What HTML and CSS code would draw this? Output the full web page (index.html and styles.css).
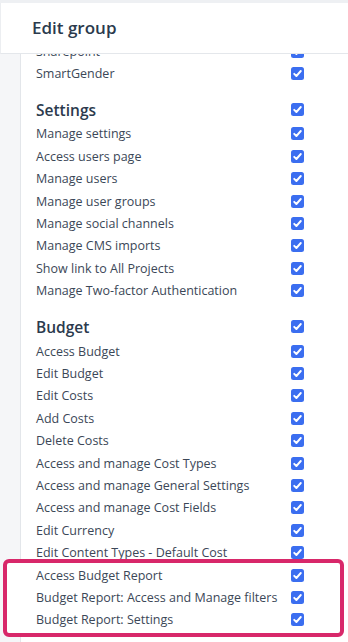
FILE: index.html
```html
<!DOCTYPE html>
<html>
<head>
<meta charset="utf-8">
<link rel="stylesheet" href="styles.css">
</head>
<body>
<div class="topstrip"></div>
<header class="header"><h1 class="title">Edit group</h1></header>
<main class="main">
  <div class="list">
    <div class="row"><span class="label">Sharepoint</span><span class="cb"></span></div>
    <div class="row"><span class="label">SmartGender</span><span class="cb"></span></div>

    <div class="row heading"><span class="label">Settings</span><span class="cb"></span></div>
    <div class="row"><span class="label">Manage settings</span><span class="cb"></span></div>
    <div class="row"><span class="label">Access users page</span><span class="cb"></span></div>
    <div class="row"><span class="label">Manage users</span><span class="cb"></span></div>
    <div class="row"><span class="label">Manage user groups</span><span class="cb"></span></div>
    <div class="row"><span class="label">Manage social channels</span><span class="cb"></span></div>
    <div class="row"><span class="label">Manage CMS imports</span><span class="cb"></span></div>
    <div class="row"><span class="label">Show link to All Projects</span><span class="cb"></span></div>
    <div class="row"><span class="label">Manage Two-factor Authentication</span><span class="cb"></span></div>

    <div class="row heading"><span class="label">Budget</span><span class="cb"></span></div>
    <div class="row"><span class="label">Access Budget</span><span class="cb"></span></div>
    <div class="row"><span class="label">Edit Budget</span><span class="cb"></span></div>
    <div class="row"><span class="label">Edit Costs</span><span class="cb"></span></div>
    <div class="row"><span class="label">Add Costs</span><span class="cb"></span></div>
    <div class="row"><span class="label">Delete Costs</span><span class="cb"></span></div>
    <div class="row"><span class="label">Access and manage Cost Types</span><span class="cb"></span></div>
    <div class="row"><span class="label">Access and manage General Settings</span><span class="cb"></span></div>
    <div class="row"><span class="label">Access and manage Cost Fields</span><span class="cb"></span></div>
    <div class="row"><span class="label">Edit Currency</span><span class="cb"></span></div>
    <div class="row"><span class="label">Edit Content Types - Default Cost</span><span class="cb"></span></div>
    <div class="highlight">
      <div class="row"><span class="label">Access Budget Report</span><span class="cb"></span></div>
      <div class="row"><span class="label">Budget Report: Access and Manage filters</span><span class="cb"></span></div>
      <div class="row"><span class="label">Budget Report: Settings</span><span class="cb"></span></div>
    </div>
  </div>
</main>
</body>
</html>
```

FILE: styles.css
```css
html, body {
  margin: 0;
  padding: 0;
  height: 100%;
  overflow: hidden;
  background: #ffffff;
  font-family: "Open Sans", "Noto Sans", sans-serif;
  color: #3a4656;
}

.topstrip {
  height: 3px;
  background: #eef0f3;
}

.header {
  height: 51px;
  box-sizing: border-box;
  border-bottom: 1px solid #e4e7eb;
  border-left: 1px solid #eceef1;
  display: flex;
  align-items: center;
  padding-left: 31px;
  padding-bottom: 1px;
}

.title {
  margin: 0;
  font-size: 17px;
  font-weight: 600;
  color: #2b3a4d;
}

.main {
  height: 588px;
  overflow: hidden;
  padding-left: 21px;
  background: linear-gradient(to right, #f5f6f8 0, #f5f6f8 20px, #e3e6ea 20px, #e3e6ea 21px, transparent 21px);
}

.list {
  margin-top: -14.2px;
  padding-left: 15px;
  padding-right: 44px;
}

.row {
  display: grid;
  grid-template-columns: 1fr 13px;
  align-items: center;
  height: 22.42px;
  font-size: 12.5px;
  color: #3b4757;
}

.label {
  white-space: nowrap;
}

.heading {
  height: 26px;
  margin-top: 12px;
  font-size: 15.5px;
  font-weight: 600;
  color: #2b3a4d;
}

.cb {
  width: 13px;
  height: 13px;
  border-radius: 2.5px;
  background: #3b6ef0 url("data:image/svg+xml,%3Csvg xmlns='http://www.w3.org/2000/svg' viewBox='0 0 13 13'%3E%3Cpath d='M3.2 6.8 L5.4 9 L9.8 4' fill='none' stroke='white' stroke-width='1.9' stroke-linecap='round' stroke-linejoin='round'/%3E%3C/svg%3E") center / 13px 13px no-repeat;
}

.highlight {
  position: relative;
  margin: -5px -40px 0 -33px;
  padding: 1px 36px 2px 29px;
  border: 4px solid #d8286a;
  border-radius: 6px;
  background: #ffffff;
}
```
